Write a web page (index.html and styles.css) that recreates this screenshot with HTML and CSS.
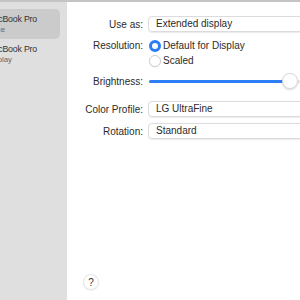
FILE: index.html
```html
<!DOCTYPE html>
<html lang="en">
<head>
  <meta charset="utf-8">
  <title>Displays</title>
<link rel="stylesheet" href="styles.css">
</head>
<body>
  <div class="window">
    <div class="sidebar">
      <div class="device device-selected">
        <p class="device-name"><span>MacBook Pro</span></p>
        <p class="device-sub sub-short"><span>Mirror Source</span></p>
      </div>
      <div class="device">
        <p class="device-name"><span>MacBook Pro</span></p>
        <p class="device-sub sub-long"><span>Main Display</span></p>
      </div>
    </div>

    <div class="main">
      <div class="row">
        <p class="label">Use as:</p>
        <div class="popup">Extended display</div>
      </div>

      <div class="row row-top">
        <p class="label">Resolution:</p>
        <div class="radios">
          <div class="radio-item"><span class="radio radio-on"></span>Default for Display</div>
          <div class="radio-item"><span class="radio"></span>Scaled</div>
        </div>
      </div>

      <div class="row">
        <p class="label">Brightness:</p>
        <div class="slider">
          <div class="slider-fill" style="width: 141px"></div>
          <span class="slider-knob" style="left: 133px"></span>
        </div>
      </div>

      <div class="row row-gap">
        <p class="label">Color Profile:</p>
        <div class="popup">LG UltraFine</div>
      </div>

      <div class="row">
        <p class="label">Rotation:</p>
        <div class="popup">Standard</div>
      </div>

      <div class="spacer"></div>

      <div class="help-row">
        <span class="help">?</span>
      </div>
    </div>
  </div>
</body>
</html>
```

FILE: styles.css
```css
body,
p {
  margin: 0;
  padding: 0;
}

body {
  width: 300px;
  height: 300px;
  overflow: hidden;
  font-family: "Liberation Sans", Arial, sans-serif;
  font-size: 10px;
  color: #2b2b2b;
  background: #fff;
}

.window {
  display: flex;
  height: 298px;
  border-top: 2px solid #c4c4c4;
}

/* Sidebar */

.sidebar {
  width: 67px;
  flex: none;
  overflow: hidden;
  background: #dfdfdf;
  padding-top: 7px;
}

.device {
  width: 68px;
  height: 30px;
  margin-left: -8px;
  border-radius: 5px;
}

.device-selected { background: #cbcbcb; }

/* lines end at a fixed x, the start runs off the left edge */
.device-name,
.device-sub {
  display: flex;
  justify-content: flex-end;
  white-space: nowrap;
}

.device-name {
  width: 45px;
  font-size: 8.8px;
  letter-spacing: -0.2px;
  line-height: 11px;
  padding-top: 5px;
  color: #333;
}

.device-sub {
  font-size: 7.8px;
  line-height: 10px;
  color: #666;
}

.sub-short { width: 13px; }
.sub-long  { width: 20px; }

.device + .device .device-name { padding-top: 5px; }

/* Main panel */

.main {
  flex: 1;
  display: flex;
  flex-direction: column;
  padding-top: 14px;
  overflow: hidden;
}

.row {
  display: flex;
  align-items: center;
  gap: 5px;
  margin-bottom: 6px;
}

.row-top { align-items: flex-start; }
.row-gap { margin-top: 6px; }

.label {
  width: 76px;
  flex: none;
  text-align: right;
  line-height: 15px;
  white-space: nowrap;
}

.popup {
  width: 180px;
  height: 16px;
  flex: none;
  box-sizing: border-box;
  padding-left: 7px;
  line-height: 14px;
  border: 1px solid #dcdcdc;
  border-radius: 4px;
  box-shadow: 0 0.5px 1px rgba(0, 0, 0, 0.08);
  white-space: nowrap;
}

.radios {
  display: flex;
  flex-direction: column;
}

.radio-item {
  display: flex;
  align-items: center;
  height: 15px;
  white-space: nowrap;
}

.radio {
  width: 12px;
  height: 12px;
  box-sizing: border-box;
  margin-left: 1px;
  margin-right: 2px;
  border: 1px solid #cfcfcf;
  border-radius: 50%;
  background: #fff;
  box-shadow: 0 0.5px 1px rgba(0, 0, 0, 0.1);
}

.radio-on {
  border: 3.5px solid #2c7cf6;
  box-shadow: none;
}

.slider {
  position: relative;
  width: 180px;
  height: 3px;
  margin-left: 1px;
  border-radius: 2px;
  background: #e1e1e1;
}

.slider-fill {
  height: 3px;
  border-radius: 2px;
  background: #2d7ef6;
}

.slider-knob {
  position: absolute;
  top: -7px;
  width: 16px;
  height: 16px;
  box-sizing: border-box;
  border-radius: 50%;
  background: #fff;
  border: 1px solid #dadada;
  box-shadow: 0 1px 2px rgba(0, 0, 0, 0.15);
}

.spacer { flex: 1; }

.help-row {
  padding-left: 16px;
  padding-bottom: 10px;
}

.help {
  display: flex;
  align-items: center;
  justify-content: center;
  width: 16px;
  height: 16px;
  box-sizing: border-box;
  border-radius: 50%;
  border: 1px solid #e4e4e4;
  box-shadow: 0 0.5px 1px rgba(0, 0, 0, 0.12);
  font-size: 10px;
  color: #333;
}
```
